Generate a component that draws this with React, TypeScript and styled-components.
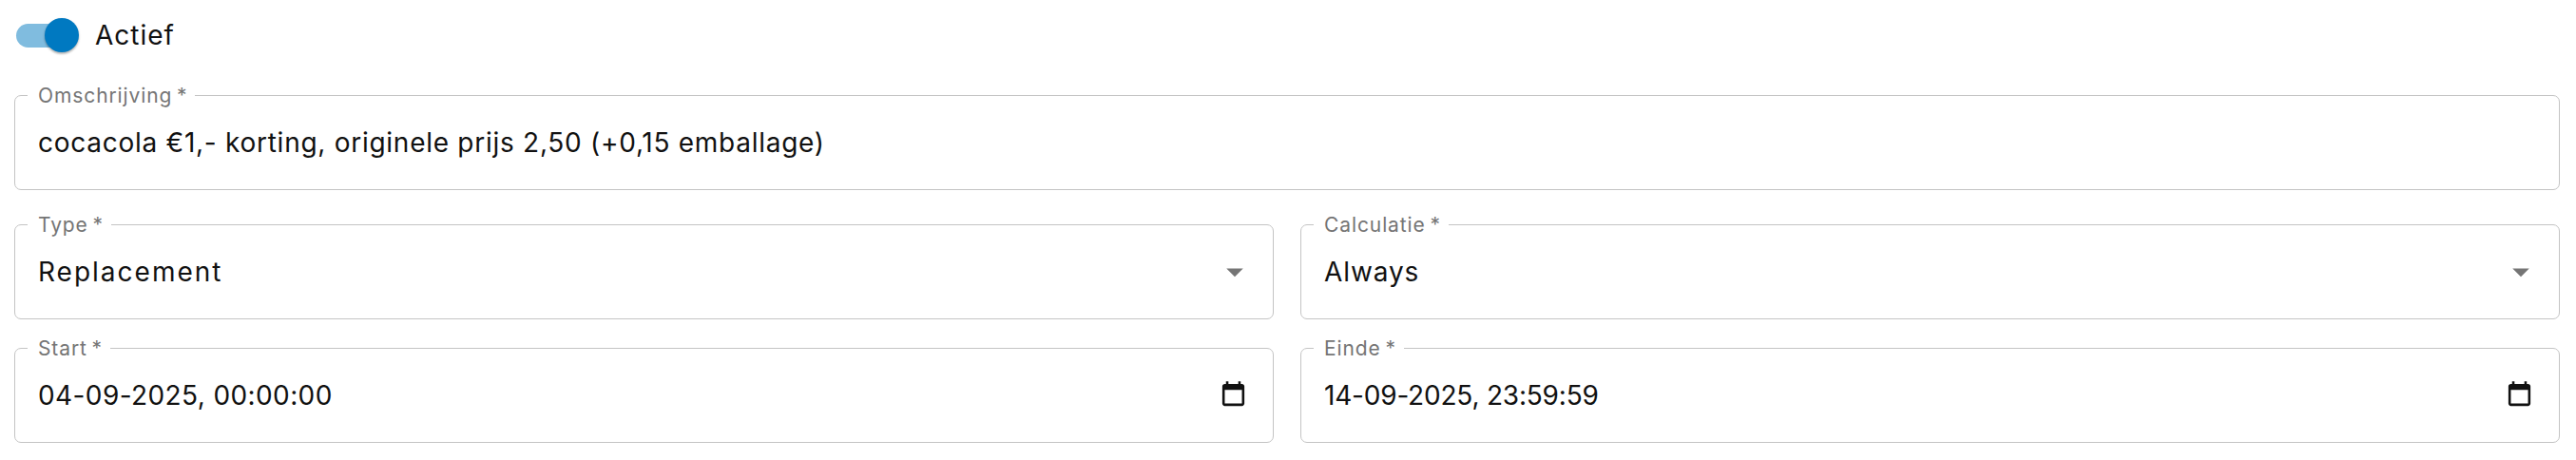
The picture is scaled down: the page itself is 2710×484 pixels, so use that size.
import React from "react";
import styled, { createGlobalStyle } from "styled-components";

const GlobalStyle = createGlobalStyle`
  html, body {
    margin: 0;
    background: #ffffff;
  }
  body {
    font-family: Inter, "Open Sans", sans-serif;
    color: #111111;
  }
`;

const Page = styled.div`
  width: 2710px;
  height: 484px;
  box-sizing: border-box;
  padding: 19px 17px 0 15px;
  display: flex;
  flex-direction: column;
  overflow: hidden;
`;

const SwitchRow = styled.div`
  display: flex;
  align-items: center;
  gap: 17px;
  height: 36px;
  padding-left: 2px;
  margin-bottom: 35px;
`;

const SwitchTrack = styled.span`
  position: relative;
  display: block;
  width: 60px;
  height: 25px;
  border-radius: 13px;
  background: #80bcdf;
  margin-right: 6px;
`;

const SwitchThumb = styled.span`
  position: absolute;
  top: -6px;
  right: -6px;
  width: 36px;
  height: 36px;
  border-radius: 50%;
  background: #0079c1;
  box-shadow: 0 2px 2px rgba(0, 0, 0, 0.2), 0 1px 3px rgba(0, 0, 0, 0.14);
`;

const SwitchLabel = styled.span`
  font-size: 28px;
  line-height: 36px;
  letter-spacing: 1px;
`;

const Form = styled.form`
  display: flex;
  flex-direction: column;
  gap: 20px;
`;

const Row = styled.div`
  display: grid;
  grid-template-columns: 1fr 1fr;
  column-gap: 28px;
`;

const Field = styled.fieldset<{ $gapBelow?: number }>`
  margin: 0 0 ${(p) => p.$gapBelow ?? 0}px;
  padding: 0;
  min-width: 0;
  height: 110px;
  box-sizing: border-box;
  border: 1.5px solid #c4c4c4;
  border-radius: 7px;
`;

const Legend = styled.legend`
  margin-left: 13px;
  padding: 0 8px 0 11px;
  font-size: 21px;
  line-height: 21px;
  letter-spacing: 0.9px;
  color: #757575;
`;

const FieldBody = styled.div`
  height: 87px;
  box-sizing: border-box;
  padding: 0 24px 10px;
  display: flex;
  align-items: center;
  justify-content: space-between;
`;

const Value = styled.span<{ $track: number }>`
  font-size: 28px;
  line-height: 36px;
  white-space: nowrap;
  letter-spacing: ${(p) => p.$track}px;
`;

const Arrow = styled.svg`
  width: 42px;
  height: 42px;
  margin-right: -5px;
  fill: #757575;
`;

const Calendar = styled.svg`
  width: 31px;
  height: 31px;
  margin-right: 2px;
  fill: #111111;
`;

const DropIcon = () => (
  <Arrow viewBox="0 0 24 24">
    <path d="M7 10l5 5 5-5z" />
  </Arrow>
);

const CalendarIcon = () => (
  <Calendar viewBox="0 0 24 24">
    <path d="M19 3h-1V1h-2v2H8V1H6v2H5c-1.11 0-1.99.9-1.99 2L3 19c0 1.1.89 2 2 2h14c1.1 0 2-.9 2-2V5c0-1.1-.9-2-2-2zm0 16H5V8h14v11z" />
  </Calendar>
);

export default function App() {
  return (
    <Page>
      <GlobalStyle />
      <SwitchRow>
        <SwitchTrack>
          <SwitchThumb />
        </SwitchTrack>
        <SwitchLabel>Actief</SwitchLabel>
      </SwitchRow>
      <Form>
        <Field $gapBelow={6}>
          <Legend>Omschrijving{"\u2009"}*</Legend>
          <FieldBody>
            <Value $track={0.73}>
              cocacola €1,- korting, originele prijs 2,50 (+0,15 emballage)
            </Value>
          </FieldBody>
        </Field>
        <Row>
          <Field>
            <Legend>Type{"\u2009"}*</Legend>
            <FieldBody>
              <Value $track={2}>Replacement</Value>
              <DropIcon />
            </FieldBody>
          </Field>
          <Field>
            <Legend>Calculatie{"\u2009"}*</Legend>
            <FieldBody>
              <Value $track={0.9}>Always</Value>
              <DropIcon />
            </FieldBody>
          </Field>
        </Row>
        <Row>
          <Field>
            <Legend>Start{"\u2009"}*</Legend>
            <FieldBody>
              <Value $track={0.4}>04-09-2025, 00:00:00</Value>
              <CalendarIcon />
            </FieldBody>
          </Field>
          <Field>
            <Legend>Einde{"\u2009"}*</Legend>
            <FieldBody>
              <Value $track={-0.2}>14-09-2025, 23:59:59</Value>
              <CalendarIcon />
            </FieldBody>
          </Field>
        </Row>
      </Form>
    </Page>
  );
}
